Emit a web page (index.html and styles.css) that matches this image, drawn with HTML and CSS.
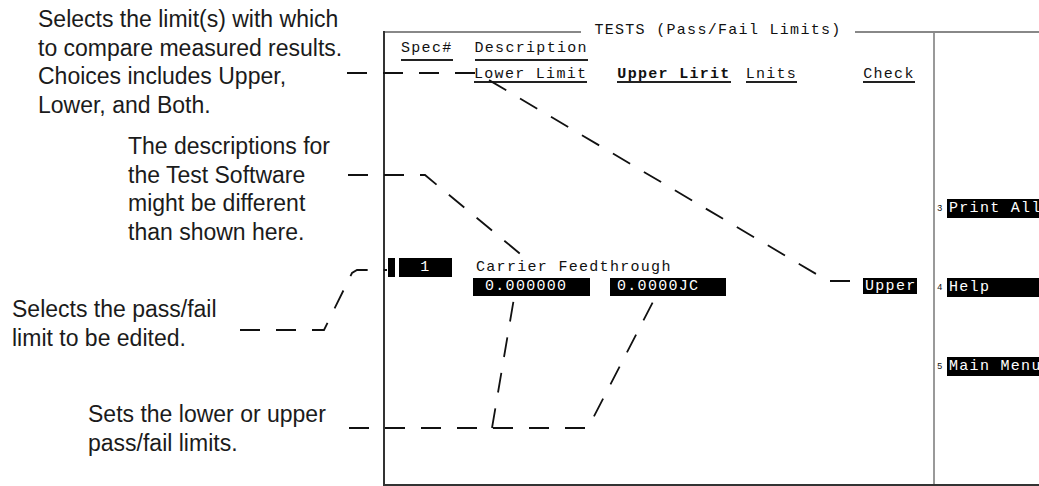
FILE: index.html
```html
<!DOCTYPE html>
<html>
<head>
  <meta charset="UTF-8">
  <title>Tests (Pass/Fail Limits)</title>
  <link rel="stylesheet" href="styles.css">
</head>
<body>
  <div class="figure">
    <div class="notes">
      <p class="note note-limits">Selects the limit(s) with which<br>to compare measured results.<br>Choices includes Upper,<br>Lower, and Both.</p>
      <p class="note note-desc">The descriptions for<br>the Test Software<br>might be different<br>than shown here.</p>
      <p class="note note-select">Selects the pass/fail<br>limit to be edited.</p>
      <p class="note note-sets">Sets the lower or upper<br>pass/fail limits.</p>
    </div>

    <div class="screen">
      <div class="screen-title"><span>TESTS (Pass/Fail Limits)</span></div>
      <div class="screen-body">
        <div class="panel">
          <div class="hdr hdr-top">
            <span class="col-spec">Spec#</span>
            <span class="col-desc">Description</span>
          </div>
          <div class="hdr hdr-bottom">
            <span class="col-lower">Lower Limit</span>
            <span class="col-upper">Upper Lirit</span>
            <span class="col-units">Lnits</span>
            <span class="col-check">Check</span>
          </div>
          <div class="row row-spec">
            <span class="cursor"></span>
            <span class="inv spec-num">1</span>
            <span class="spec-name">Carrier Feedthrough</span>
          </div>
          <div class="row row-values">
            <span class="inv val val-lower">0.000000</span>
            <span class="inv val val-upper">0.0000JC</span>
            <span class="inv val-check">Upper</span>
          </div>
        </div>
        <div class="softkeys">
          <div class="softkey"><span class="key-num">3</span><span class="inv key-label">Print All</span></div>
          <div class="softkey"><span class="key-num">4</span><span class="inv key-label">Help</span></div>
          <div class="softkey"><span class="key-num">5</span><span class="inv key-label">Main Menu</span></div>
        </div>
      </div>
    </div>
  </div>

  <!-- callout leaders drawn over the notes and the screen -->
  <svg class="leaders" width="1039" height="486" viewBox="0 0 1039 486">
    <path d="M347 73 H477 L828 281 H857" />
    <path d="M348 175 H425 L524 257" />
    <path d="M240 330 H324 L352 273 L357 270 H387" />
    <path d="M349 428 H588 L655 298" />
    <path d="M492 428 L514 298" />
  </svg>
</body>
</html>
```

FILE: styles.css
```css
body {
  margin: 0;
  width: 1039px;
  height: 486px;
  overflow: hidden;
  position: relative;
  background: #fff;
  color: #1b1b1b;
}
.figure {
  display: flex;
  height: 486px;
}

/* annotations */
.notes {
  width: 383px;
  flex-shrink: 0;
}
.note {
  margin: 0;
  font-family: "Liberation Sans", Arial, sans-serif;
  font-size: 23px;
  line-height: 28.5px;
  white-space: nowrap;
}
.note-limits { margin: 5px 0 0 38px; }
.note-desc { margin: 13px 0 0 128px; }
.note-select { margin: 49px 0 0 12px; }
.note-sets { margin: 48px 0 0 88px; }

/* instrument screen */
.screen {
  width: 666px;
  flex-shrink: 0;
  margin-top: 31px;
  border-left: 2px solid #333;
  border-bottom: 2px solid #333;
  font-family: "Liberation Mono", "DejaVu Sans Mono", monospace;
  font-size: 15px;
  letter-spacing: 1.3px;
  color: #111;
}
.screen-title {
  display: flex;
  align-items: center;
  height: 2px;
}
.screen-title::before,
.screen-title::after {
  content: "";
  flex: 1;
  border-top: 2px solid #888;
}
.screen-title span {
  padding: 0 13px;
  line-height: 20px;
  margin-bottom: 2px;
  white-space: nowrap;
}
.screen-body {
  display: grid;
  grid-template-columns: 548px 1fr;
  height: 451px;
}
.panel {
  padding-top: 6px;
}
.hdr {
  display: flex;
  align-items: flex-start;
}
.hdr span {
  border-bottom: 2px solid #222;
  white-space: nowrap;
}
.hdr-top {
  padding-left: 16px;
}
.hdr-top span {
  line-height: 20px;
}
.col-desc { margin-left: 22px; }
.hdr-bottom {
  margin-top: 6.5px;
  padding-left: 89px;
}
.hdr-bottom span {
  line-height: 13px;
}
.col-upper {
  margin-left: 30px;
  font-weight: bold;
  letter-spacing: 1.3px;
}
.col-units { margin-left: 15px; }
.col-check { margin-left: 66px; }

.row {
  display: flex;
  align-items: flex-start;
  white-space: nowrap;
}
.inv {
  background: #000;
  color: #fff;
}
.row-spec {
  margin-top: 175.5px;
  height: 20px;
  line-height: 20px;
}
.cursor {
  width: 7px;
  height: 19px;
  margin-left: 3px;
  background: #000;
}
.spec-num {
  width: 53px;
  height: 19px;
  margin-left: 4px;
  text-align: center;
}
.spec-name {
  margin-left: 24px;
}
.row-values {
  height: 18px;
  line-height: 18px;
}
.val {
  height: 18px;
  box-sizing: border-box;
}
.val-lower {
  width: 117px;
  margin-left: 88px;
  padding-left: 12px;
}
.val-upper {
  width: 116px;
  margin-left: 20px;
  padding-left: 7px;
}
.val-check {
  width: 54px;
  height: 16px;
  line-height: 17px;
  margin-left: 137px;
  padding-left: 2px;
  box-sizing: border-box;
}

/* softkeys */
.softkeys {
  border-left: 2px solid #999;
  padding-top: 166px;
  display: flex;
  flex-direction: column;
  gap: 60px;
}
.softkey {
  display: flex;
  align-items: center;
  height: 19px;
  white-space: nowrap;
}
.key-num {
  width: 10px;
  padding-left: 2px;
  font-size: 9px;
  letter-spacing: 0;
}
.key-label {
  flex: 1;
  height: 19px;
  line-height: 19px;
  padding-left: 2px;
  overflow: hidden;
}

/* leaders */
.leaders {
  position: absolute;
  left: 0;
  top: 0;
  pointer-events: none;
}
.leaders path {
  fill: none;
  stroke: #111;
  stroke-width: 1.8;
  stroke-dasharray: 20 16;
}
```
